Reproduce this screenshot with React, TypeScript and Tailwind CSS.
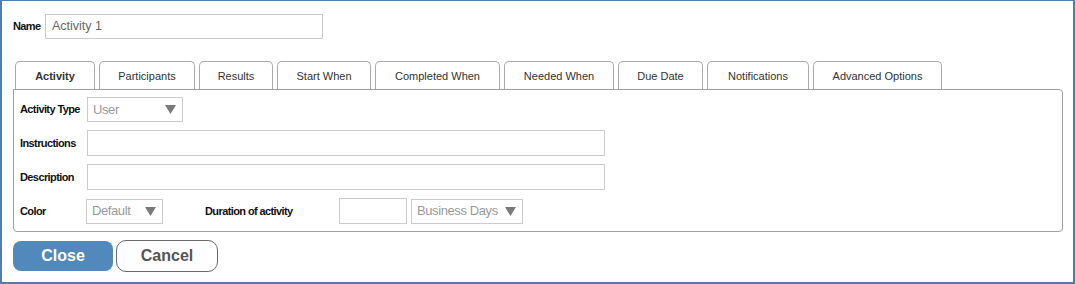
const tabs = [
  { label: 'Activity', w: 'w-[80px]', active: true },
  { label: 'Participants', w: 'w-[96px]' },
  { label: 'Results', w: 'w-[74px]' },
  { label: 'Start When', w: 'w-[94px]' },
  { label: 'Completed When', w: 'w-[125px]' },
  { label: 'Needed When', w: 'w-[110px]' },
  { label: 'Due Date', w: 'w-[85px]' },
  { label: 'Notifications', w: 'w-[102px]' },
  { label: 'Advanced Options', w: 'w-[129px]' },
];

function Arrow() {
  return (
    <svg width="11" height="9" viewBox="0 0 11 9" className="shrink-0">
      <polygon points="0,0 11,0 5.5,9" fill="#7a7a7a" />
    </svg>
  );
}

function Select({ value, className }: { value: string; className: string }) {
  return (
    <div
      className={`flex items-center justify-between border border-[#cccccc] bg-white pl-[5px] pr-[6px] text-[13px] tracking-[-0.4px] text-[#9a9a9a] ${className}`}
    >
      <span>{value}</span>
      <Arrow />
    </div>
  );
}

function Label({ children, className = '' }: { children: string; className?: string }) {
  return <div className={`text-[11px] font-bold tracking-[-0.6px] text-[#111] ${className}`}>{children}</div>;
}

export default function App() {
  return (
    <div className="w-[1075px] h-[284px] bg-white border-t border-l-2 border-r-2 border-b-2 border-[#4f7db0] pl-[11px] pt-[13px] font-['Liberation_Sans',Arial,sans-serif]">
      {/* Name */}
      <div className="flex items-center h-[25px]">
        <Label className="w-[32px]">Name</Label>
        <div className="flex items-center w-[278px] h-[25px] border border-[#cccccc] pl-[6px] text-[12.5px] text-[#666]">
          Activity 1
        </div>
      </div>

      {/* Tabs */}
      <div className="flex gap-[4px] mt-[22px] pl-[2px]">
        {tabs.map((t) => (
          <div
            key={t.label}
            className={`${t.w} h-[28px] pt-[2px] flex items-center justify-center border border-b-0 border-[#aaaaaa] rounded-t-[5px] text-[11px] text-[#333] ${t.active ? 'font-bold' : ''}`}
          >
            {t.label}
          </div>
        ))}
      </div>

      {/* Panel */}
      <div className="w-[1050px] h-[143px] border border-[#a0a0a0] rounded-b-[4px] rounded-tr-[4px] px-[6px] pt-[7px] flex flex-col gap-[8px]">
        <div className="flex items-center">
          <Label className="w-[67px]">Activity Type</Label>
          <Select value="User" className="w-[96px] h-[25px]" />
        </div>
        <div className="flex items-center">
          <Label className="w-[67px]">Instructions</Label>
          <div className="w-[518px] h-[26px] border border-[#cccccc]" />
        </div>
        <div className="flex items-center">
          <Label className="w-[67px]">Description</Label>
          <div className="w-[518px] h-[26px] border border-[#cccccc]" />
        </div>
        <div className="flex items-center">
          <Label className="w-[66px]">Color</Label>
          <Select value="Default" className="w-[77px] h-[25px]" />
          <Label className="ml-[42px] w-[134px]">Duration of activity</Label>
          <div className="w-[68px] h-[26px] border border-[#cccccc]" />
          <Select value="Business Days" className="ml-[4px] w-[112px] h-[25px]" />
        </div>
      </div>

      {/* Buttons */}
      <div className="flex items-center gap-[3px] mt-[8px]">
        <button className="w-[100px] h-[30px] rounded-[8px] bg-[#5289bd] text-white text-[16px] font-bold">
          Close
        </button>
        <button className="w-[102px] h-[32px] rounded-[10px] border border-[#6a6a6a] bg-white text-[#555] text-[16px] font-bold">
          Cancel
        </button>
      </div>
    </div>
  );
}
